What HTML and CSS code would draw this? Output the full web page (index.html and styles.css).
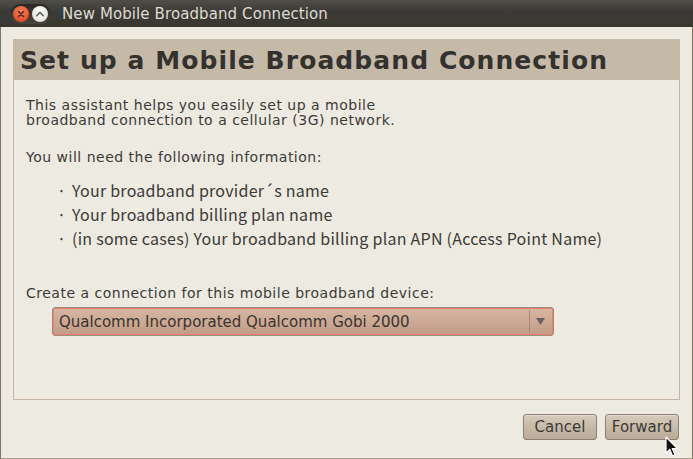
FILE: index.html
```html
<!DOCTYPE html>
<html>
<head>
<meta charset="utf-8">
<link rel="stylesheet" href="styles.css">
</head>
<body>
<div class="window">
  <div class="titlebar">
    <div class="controls">
      <span class="btn-close">
        <svg width="16" height="16" viewBox="0 0 16 16"><path d="M5.5 5.5 L10.5 10.5 M10.5 5.5 L5.5 10.5" stroke="#5a2a18" stroke-width="1.6" stroke-linecap="round"/></svg>
      </span>
      <span class="btn-min">
        <svg width="16" height="16" viewBox="0 0 16 16"><path d="M4.8 9.6 L8 6.4 L11.2 9.6" fill="none" stroke="#6a6a66" stroke-width="1.6" stroke-linecap="round" stroke-linejoin="round"/></svg>
      </span>
    </div>
    <div class="title">New Mobile Broadband Connection</div>
  </div>
  <div class="main">
    <div class="header">Set up a Mobile Broadband Connection</div>
    <div class="page">
      <p class="intro">This assistant helps you easily set up a mobile<br>broadband connection to a cellular (3G) network.</p>
      <p class="need">You will need the following information:</p>
      <ul class="list">
        <li><span class="dot">·</span>Your broadband provider´s name</li>
        <li><span class="dot">·</span>Your broadband billing plan name</li>
        <li><span class="dot">·</span>(in some cases) Your broadband billing plan APN (Access Point Name)</li>
      </ul>
      <p class="create">Create a connection for this mobile broadband device:</p>
      <div class="combo">
        <span class="combo-text">Qualcomm Incorporated Qualcomm Gobi 2000</span>
        <span class="combo-arrow"><svg width="9" height="7" viewBox="0 0 9 7"><path d="M0 0 H9 L4.5 7 Z" fill="#6a625a"/></svg></span>
      </div>
    </div>
    <div class="buttons">
      <button class="button">Cancel</button>
      <button class="button">Forward</button>
    </div>
  </div>
  <svg class="cursor" width="14" height="22" viewBox="0 0 14 22"><path d="M1 1 L1 17 L4.8 13.4 L7.6 20 L10 19 L7.3 12.6 L12.4 12.6 Z" fill="#111" stroke="#fff" stroke-width="1.2" stroke-linejoin="round"/></svg>
</div>
</body>
</html>
```

FILE: styles.css
```css
html, body {
  margin: 0;
  padding: 0;
  background: #edeae2;
}
body {
  width: 693px;
  height: 459px;
  overflow: hidden;
  font-family: "DejaVu Sans", sans-serif;
  color: #3c3b37;
}
.window {
  position: relative;
  width: 693px;
  height: 459px;
  box-sizing: border-box;
  border-left: 1px solid #7d7565;
  border-right: 1px solid #7d7565;
  border-bottom: 1px solid #a79d8b;
  background: #edeae2;
  display: flex;
  flex-direction: column;
}
.titlebar {
  height: 27px;
  flex: none;
  background: linear-gradient(#4f4e49, #3c3b37 40%, #38372f);
  display: flex;
  align-items: center;
  margin: 0 -1px;
}
.controls {
  margin-left: 10px;
  width: 41px;
  height: 20px;
  border-radius: 10px;
  background: linear-gradient(#2a2926, #45443f);
  display: flex;
  align-items: center;
  justify-content: space-between;
  padding: 0 3px;
  box-sizing: border-box;
}
.btn-close, .btn-min {
  width: 16px;
  height: 16px;
  border-radius: 50%;
  display: block;
}
.btn-close {
  background: radial-gradient(circle at 50% 35%, #f7825a, #e4502a 70%, #c23d1c);
}
.btn-min {
  background: radial-gradient(circle at 50% 35%, #ffffff, #e7e5e0 65%, #c9c6bf);
}
.btn-close svg, .btn-min svg { display: block; }
.title {
  margin-left: 11px;
  color: #dfdbd2;
  font-size: 15px;
  letter-spacing: 0.1px;
}
.main {
  flex: 1;
  padding: 12px 12px 0 12px;
  display: flex;
  flex-direction: column;
}
.header {
  height: 41px;
  background: #c5b9a7;
  color: #33322e;
  font-weight: bold;
  font-size: 25px;
  line-height: 43px;
  padding-left: 7px;
  letter-spacing: 1.08px;
  box-sizing: border-box;
  white-space: nowrap;
}
.page {
  height: 320px;
  border: 1px solid #c4b8a5;
  border-top: none;
  box-sizing: border-box;
  padding: 18px 0 0 12px;
  font-size: 14px;
  letter-spacing: 0.5px;
  color: #3c3b37;
}
.page p {
  margin: 0;
  line-height: 15px;
}
.need { margin-top: 22px !important; }
.list {
  list-style: none;
  margin: 13px 0 0 0;
  padding: 0;
  font-family: "Noto Sans CJK KR", "DejaVu Sans", sans-serif;
  font-size: 16px;
  letter-spacing: 0.25px;
}
.list li {
  height: 24px;
  line-height: 24px;
  display: flex;
  white-space: nowrap;
}
.dot {
  width: 46px;
  padding-left: 31px;
  box-sizing: border-box;
}
.create { margin-top: 36px !important; }
.combo {
  margin: 6px 0 0 26px;
  width: 502px;
  height: 29px;
  box-sizing: border-box;
  border: 1px solid #9a8e80;
  border-radius: 3px;
  background: linear-gradient(#d7b6a1, #c29d87);
  box-shadow: inset 0 0 0 1px #f07c6a;
  display: flex;
  align-items: center;
}
.combo-text {
  flex: 1;
  padding-left: 6px;
  font-size: 15px;
  letter-spacing: 0;
  color: #3a342e;
}
.combo-arrow {
  width: 21px;
  align-self: stretch;
  border-left: 1px solid #a58876;
  display: flex;
  align-items: center;
  justify-content: center;
  margin: 2px 2px 2px 0;
}
.combo-arrow svg { display: block; }
.buttons {
  display: flex;
  justify-content: flex-end;
  gap: 8px;
  margin-top: 14px;
  padding-right: 1px;
}
.button {
  height: 26px;
  width: 74px;
  padding: 0;
  font-family: "DejaVu Sans", sans-serif;
  font-size: 15px;
  color: #3c3b37;
  border: 1px solid #8b8172;
  border-radius: 3px;
  background: linear-gradient(#d6cbbc, #b8aa96);
  box-shadow: inset 0 1px 0 rgba(255,255,255,0.35);
}
.cursor {
  position: absolute;
  left: 664px;
  top: 436px;
}
```
